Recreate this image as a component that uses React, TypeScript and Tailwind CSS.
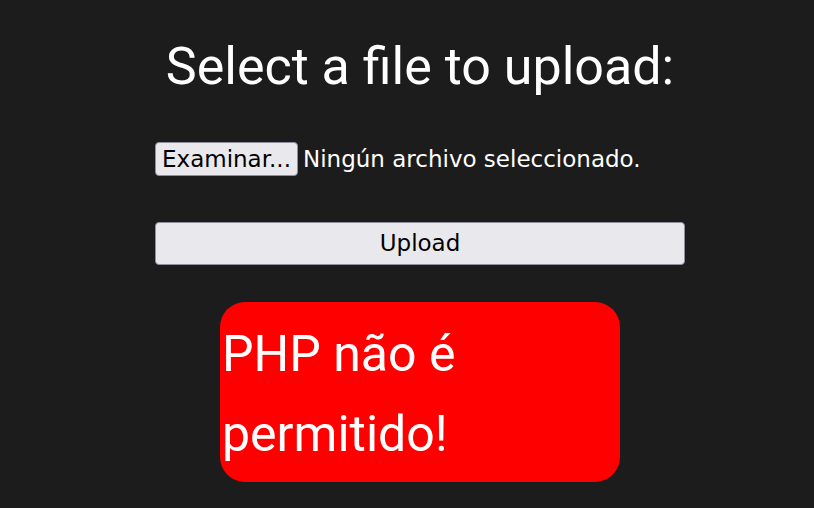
export default function App() {
  return (
    <div className="min-h-screen w-full bg-[#1c1c1c] font-['Roboto',sans-serif]">
      <div className="flex w-[685px] flex-col pl-[155px]">
        <h1 className="pt-[37px] text-center text-[52px] font-normal leading-[60px] text-white">
          Select a file to upload:
        </h1>
        <div className="mt-[45px] flex items-center gap-[5px] font-['DejaVu_Sans',sans-serif] text-[23px] text-white">
          <span className="flex h-[34px] items-center rounded-[4px] border border-[#8f8f9d] bg-[#e9e9ed] px-[6px] text-black">
            Examinar...
          </span>
          <span>Ningún archivo seleccionado.</span>
        </div>
        <button className="mt-[45px] h-[43px] w-[530px] rounded-[4px] border border-[#8f8f9d] bg-[#e9e9ed] font-['DejaVu_Sans',sans-serif] text-[23px] text-black">
          Upload
        </button>
        <div className="mx-auto mt-[37px] h-[180px] w-[400px] rounded-[25px] bg-[#ff0000] pl-[2px] pt-[12px] text-[50px] leading-[80px] text-white">
          PHP não é permitido!
        </div>
      </div>
    </div>
  );
}
